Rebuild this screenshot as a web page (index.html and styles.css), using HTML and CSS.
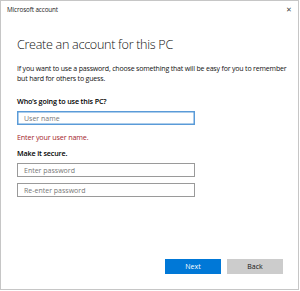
FILE: index.html
```html
<!DOCTYPE html>
<html lang="en">
<head>
    <meta charset="UTF-8">
    <title>Microsoft account</title>
    <link rel="stylesheet" href="styles.css">
</head>
<body>

<div class="window">
    <div class="titlebar">
        <span class="title">Microsoft account</span>
        <span class="close">&#10005;</span>
    </div>

    <div class="content">
        <h1>Create an account for this PC</h1>
        <p class="intro">If you want to use a password, choose something that will be easy for you to remember but hard for others to guess.</p>

        <div class="label">Who’s going to use this PC?</div>
        <input type="text" class="field active" placeholder="User name">
        <div class="error">Enter your user name.</div>

        <div class="label secure">Make it secure.</div>
        <input type="password" class="field" placeholder="Enter password">
        <input type="password" class="field" placeholder="Re-enter password">
    </div>

    <div class="buttons">
        <button class="next">Next</button>
        <button class="back">Back</button>
    </div>
</div>

</body>
</html>
```

FILE: styles.css
```css
html, body {
    margin: 0;
    width: 300px;
    height: 291px;
    background: #fff;
    overflow: hidden;
}

body {
    font-family: "Open Sans", "Noto Sans", sans-serif;
    color: #000;
}

.window {
    box-sizing: border-box;
    width: 299px;
    height: 290px;
    border: 1px solid #c6c6c6;
    display: flex;
    flex-direction: column;
}

.titlebar {
    display: flex;
    justify-content: space-between;
    align-items: center;
    height: 16px;
    padding: 0 6px 0 6px;
}

.title {
    font-size: 6.3px;
    letter-spacing: -0.1px;
    color: #222;
}

.close {
    font-size: 7px;
    color: #444;
}

.content {
    padding: 19px 16px 0 16px;
    display: flex;
    flex-direction: column;
    align-items: flex-start;
}

h1 {
    margin: 0;
    font-size: 12.6px;
    font-weight: 300;
    letter-spacing: -0.3px;
    color: #111;
    line-height: 18px;
}

.intro {
    margin: 10px -10px 0 0;
    font-size: 7px;
    letter-spacing: -0.18px;
    line-height: 10px;
    color: #111;
}

.label {
    margin-top: 12px;
    font-size: 7.2px;
    font-weight: 600;
    letter-spacing: -0.15px;
    line-height: 10px;
}

.label.secure {
    margin-top: 6px;
}

.field {
    box-sizing: border-box;
    width: 178px;
    height: 14px;
    margin: 5px 0 0 0;
    padding: 0 6px;
    border: 1px solid #9a9a9a;
    border-radius: 0;
    font-family: inherit;
    font-size: 7px;
    outline: none;
}

.field::placeholder {
    color: #777;
}

.field.active {
    border-color: #5a9bd8;
    box-shadow: inset 0 0 0 0.5px #5a9bd8;
}

.error {
    margin-top: 7px;
    font-size: 7.2px;
    letter-spacing: -0.15px;
    line-height: 10px;
    color: #a4262c;
}

.content .field + .field {
    margin-top: 6px;
}

.buttons {
    margin-top: auto;
    display: flex;
    justify-content: flex-end;
    gap: 6px;
    padding: 0 15px 15px 0;
}

button {
    width: 56px;
    height: 15px;
    border: none;
    border-radius: 0;
    font-family: inherit;
    font-size: 7px;
    padding: 0;
    cursor: pointer;
}

.next {
    background-color: #0078d7;
    color: #fff;
}

.back {
    background-color: #cccccc;
    color: #111;
}
```
